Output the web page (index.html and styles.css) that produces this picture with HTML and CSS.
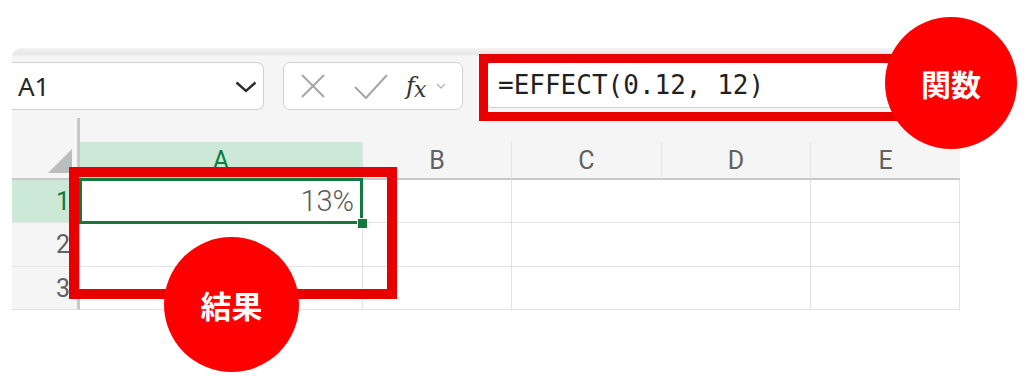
FILE: index.html
```html
<!DOCTYPE html>
<html lang="ja">
<head>
<meta charset="utf-8">
<title>EFFECT</title>
<link rel="stylesheet" href="styles.css">
</head>
<body>
<div class="sheet">
  <div class="toolbar">
    <div class="namebox">
      <span class="name">A1</span>
      <svg class="chev" width="22" height="12" viewBox="0 0 22 12"><path d="M1.5 1.5 L11 10 L20.5 1.5" fill="none" stroke="#2b2b2b" stroke-width="2.4"/></svg>
    </div>
    <div class="fxbox">
      <svg width="24" height="24" viewBox="0 0 24 24"><path d="M1 1 L23 23 M23 1 L1 23" stroke="#a6a6a6" stroke-width="2" fill="none"/></svg>
      <svg width="34" height="25" viewBox="0 0 34 25"><path d="M1 13 L12 24 L33 1" stroke="#a6a6a6" stroke-width="2" fill="none"/></svg>
      <span class="fx"><i>f</i><i class="fxx">x</i></span>
      <svg width="10" height="6" viewBox="0 0 10 6"><path d="M1 1 L5 5 L9 1" stroke="#b5b5b5" stroke-width="1.3" fill="none"/></svg>
    </div>
    <div class="formula">=EFFECT(0.12, 12)</div>
  </div>
  <div class="grid">
    <div class="rh top"></div><div class="spacer"></div>
    <div class="rh corner"><svg width="24" height="24" viewBox="0 0 24 24"><polygon points="24,0 24,24 0,24" fill="#bdbdbd"/></svg></div>
    <div class="ch sel">A</div><div class="ch">B</div><div class="ch">C</div><div class="ch">D</div><div class="ch">E</div>
    <div class="rh num sel">1</div>
    <div class="cell a1"><span class="val">13%</span><span class="selbox"></span><span class="handle"></span></div>
    <div class="cell"></div><div class="cell"></div><div class="cell"></div><div class="cell"></div>
    <div class="rh num">2</div>
    <div class="cell"></div><div class="cell"></div><div class="cell"></div><div class="cell"></div><div class="cell"></div>
    <div class="rh num">3</div>
    <div class="cell"></div><div class="cell"></div><div class="cell"></div><div class="cell"></div><div class="cell"></div>
  </div>
</div>
<div class="mark mark-formula"></div>
<div class="mark mark-result"></div>
<div class="badge badge-func">関数</div>
<div class="badge badge-result">結果</div>
</body>
</html>
```
FILE: styles.css
```css
html, body {
  margin: 0;
  padding: 0;
  background: #ffffff;
}
body {
  width: 1024px;
  height: 388px;
  position: relative;
  overflow: hidden;
  font-family: Roboto, "Noto Sans", sans-serif;
}
.sheet {
  margin: 48px 0 0 12px;
  width: 948px;
  background: linear-gradient(#f4f4f4 0, #e6e6e6 6px, #f5f5f5 8px, #f5f5f5 100%);
  border-top-left-radius: 9px;
}
.toolbar {
  height: 70px;
  box-sizing: border-box;
  padding-top: 14px;
  display: flex;
  align-items: flex-start;
}
.namebox {
  width: 252px;
  height: 48px;
  box-sizing: border-box;
  background: #fff;
  border: 1px solid #d0d0d0;
  border-left: none;
  border-radius: 0 7px 7px 0;
  display: flex;
  align-items: center;
  justify-content: space-between;
  padding: 0 6px 0 6px;
}
.name {
  font-family: "Noto Sans", sans-serif;
  font-size: 26px;
  color: #262626;
}
.chev { margin-top: 2px; }
.fxbox {
  margin-left: 19px;
  width: 180px;
  height: 48px;
  box-sizing: border-box;
  background: #fff;
  border: 1px solid #d0d0d0;
  border-radius: 7px;
  display: flex;
  align-items: center;
  padding-left: 17px;
}
.fxbox svg:nth-child(2) { margin-left: 29px; }
.fx {
  margin-left: 18px;
  font-family: "DejaVu Serif", serif;
  font-size: 24px;
  color: #333;
  letter-spacing: -1px;
}
.fx .fxx { font-size: 22px; position: relative; top: 3px; }
.fxbox svg:last-child { margin-left: 11px; }
.formula {
  margin-left: 24px;
  flex: 1;
  margin-right: 6px;
  height: 46px;
  box-sizing: border-box;
  background: #fff;
  border: 1px solid #d0d0d0;
  border-radius: 4px;
  display: flex;
  align-items: center;
  padding-left: 10px;
  font-family: "DejaVu Sans Mono", "Liberation Mono", monospace;
  font-size: 26px;
  color: #1f1f1f;
}
.grid {
  display: grid;
  grid-template-columns: 68px 283px 149px 150px 149px 149px;
  grid-template-rows: 24px 38px 43px 44px 43px;
}
.rh {
  box-sizing: border-box;
  border-right: 3px solid #c8c8c8;
  background: #f5f5f5;
}
.spacer { grid-column: span 5; }
.corner {
  border-bottom: 2px solid #c8c8c8;
  display: flex;
  justify-content: flex-end;
  align-items: flex-end;
  padding: 0 5px 5px 0;
}
.ch {
  box-sizing: border-box;
  background: #f5f5f5;
  border-right: 1px solid #e2e2e2;
  border-bottom: 2px solid #c8c8c8;
  display: flex;
  align-items: center;
  justify-content: center;
  font-size: 25px;
  color: #616161;
}
.ch:nth-child(8) { border-right: none; }
.ch.sel {
  background: #cbe9d6;
  color: #107c41;
}
.num {
  border-bottom: 1px solid #e2e2e2;
  display: flex;
  align-items: center;
  justify-content: flex-end;
  padding-right: 7px;
  font-size: 25px;
  color: #616161;
}
.num.sel {
  background: #cbe9d6;
  color: #107c41;
}
.cell {
  box-sizing: border-box;
  background: #fff;
  border-right: 1px solid #e2e2e2;
  border-bottom: 1px solid #e2e2e2;
}
.cell:nth-child(6n) { border-right: none; }
.a1 {
  position: relative;
  z-index: 1;
  display: flex;
  align-items: center;
  justify-content: flex-end;
  padding-right: 8px;
}
.val {
  font-size: 29px;
  font-weight: 300;
  color: #5a5a5a;
}
.selbox {
  position: absolute;
  left: -1px;
  top: -2px;
  right: -1px;
  bottom: -2px;
  border: 3px solid #137a3f;
}
.handle {
  position: absolute;
  right: -5px;
  bottom: -6px;
  width: 9px;
  height: 9px;
  background: #137a3f;
  outline: 1px solid #fff;
}
.mark {
  position: absolute;
  box-sizing: border-box;
  border: 9px solid #e80000;
}
.mark-formula {
  left: 479px;
  top: 54px;
  width: 430px;
  height: 67px;
}
.mark-result {
  left: 69px;
  top: 167px;
  width: 328px;
  height: 132px;
  border-width: 10px;
}
.badge {
  position: absolute;
  border-radius: 50%;
  background: #ff0000;
  color: #fff;
  display: flex;
  align-items: center;
  justify-content: center;
  font-family: "Noto Sans CJK JP", sans-serif;
  font-weight: 700;
  font-size: 30px;
}
.badge-func {
  left: 885px;
  top: 17px;
  width: 132px;
  height: 132px;
}
.badge-result {
  left: 164px;
  top: 237px;
  width: 135px;
  height: 135px;
  font-size: 31px;
}
```
